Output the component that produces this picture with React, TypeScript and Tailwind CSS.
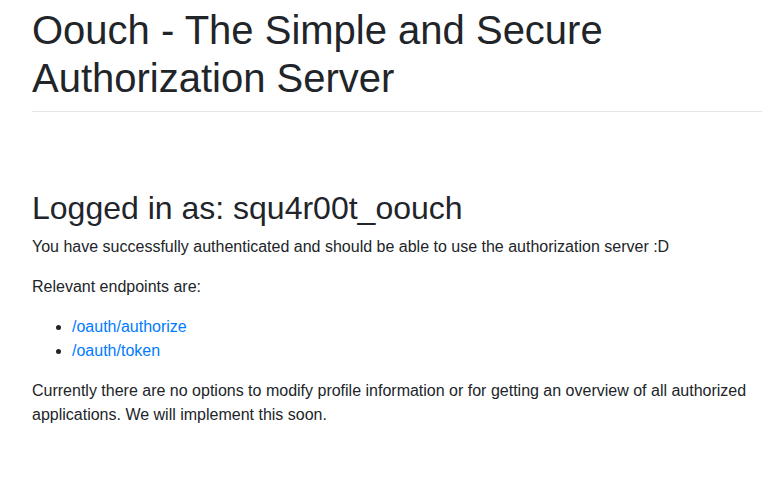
export default function App() {
  return (
    <div className="min-h-screen bg-white font-['Liberation_Sans',Arial,sans-serif] text-base leading-6 text-[#212529] pl-8 pr-[10px] pt-[6px]">
      {/* Page header */}
      <div className="pb-[9px] border-b border-[#e5e5e5]">
        <h1 className="text-[40px] leading-[48px] font-normal">
          Oouch - The Simple and Secure Authorization Server
        </h1>
      </div>

      {/* Profile */}
      <h2 className="mt-[77px] mb-2 text-[32px] leading-[38px] font-normal">
        Logged in as: squ4r00t_oouch
      </h2>
      <p className="mb-4">
        You have successfully authenticated and should be able to use the authorization server :D
      </p>
      <p className="mb-4">Relevant endpoints are:</p>
      <ul className="mb-4 pl-10 list-disc">
        <li>
          <a href="#" className="text-[#007bff]">
            /oauth/authorize
          </a>
        </li>
        <li>
          <a href="#" className="text-[#007bff]">
            /oauth/token
          </a>
        </li>
      </ul>
      <p className="mb-4">
        Currently there are no options to modify profile information or for getting an overview of all
        authorized applications. We will implement this soon.
      </p>
    </div>
  );
}
